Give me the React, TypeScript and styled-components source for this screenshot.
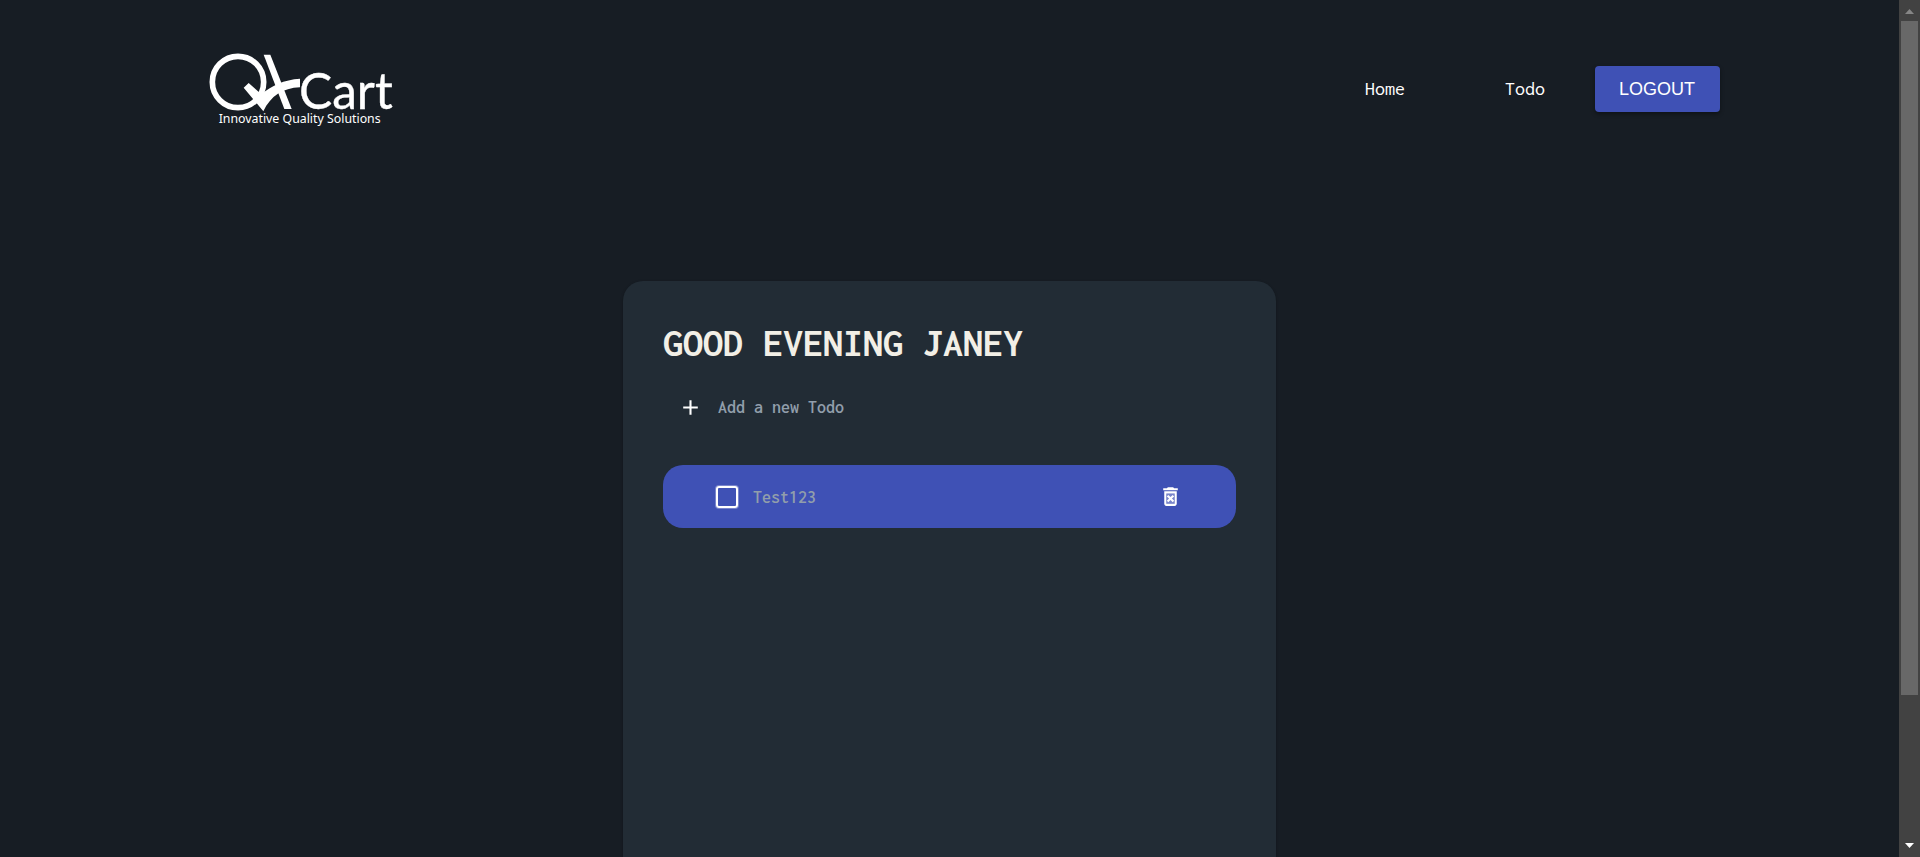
import React from "react";
import styled, { createGlobalStyle } from "styled-components";

const MONO = 'Inconsolata, "Liberation Mono", monospace';

const GlobalStyle = createGlobalStyle`
  *, *::before, *::after { box-sizing: border-box; }
  body { margin: 0; background: #171d24; color: #fff; font-family: ${MONO}; }
`;

const Shell = styled.div`
  display: flex;
  height: 100vh;
`;

const Page = styled.div`
  flex: 1;
  min-width: 0;
  overflow: auto;
  scrollbar-width: none;
`;

const Header = styled.header`
  display: flex;
  align-items: center;
  justify-content: space-between;
  max-width: 1541px;
  height: 178px;
  margin: 0 auto;
`;

const LogoLink = styled.a`
  display: block;
  padding-left: 30px;
  color: #fff;
  svg { display: block; overflow: visible; }
`;

const Nav = styled.nav`
  display: flex;
  align-items: center;
`;

const NavLink = styled.a`
  padding: 0 50px;
  color: #fff;
  font-size: 20px;
  line-height: 24px;
  text-decoration: none;
`;

const LogoutButton = styled.button`
  width: 125px;
  height: 46px;
  padding: 0 24px;
  border: 0;
  border-radius: 4px;
  background: #3f51b5;
  color: #fff;
  font: 18px/24px "Liberation Sans", Arial, sans-serif;
  text-align: left;
  box-shadow: 0 2px 4px rgba(0, 0, 0, 0.4);
  cursor: pointer;
`;

const Card = styled.main`
  max-width: 653px;
  min-height: 710px;
  margin: 103px auto 40px;
  padding: 40px;
  border-radius: 20px;
  background: #222c35;
  box-shadow: 0 1px 3px rgba(0, 0, 0, 0.3);
`;

const Greeting = styled.h1`
  margin: 0;
  color: #f2efe6;
  font-size: 40px;
  font-weight: 700;
  line-height: 44px;
`;

const AddRow = styled.form`
  display: flex;
  align-items: center;
  gap: 15px;
  height: 40px;
  margin: 22px 0 38px;
  padding-left: 15px;
`;

const IconButton = styled.button`
  display: flex;
  padding: 0;
  border: 0;
  background: none;
  color: #fff;
  cursor: pointer;
`;

const TodoInput = styled.input`
  flex: 1;
  min-width: 0;
  padding: 0;
  border: 0;
  outline: 0;
  background: none;
  color: #fff;
  font: 600 18px/24px ${MONO};
  &::placeholder { color: #919eab; opacity: 1; }
`;

const TodoList = styled.ul`
  margin: 0;
  padding: 0;
  list-style: none;
`;

const TodoItem = styled.li`
  display: flex;
  align-items: center;
  justify-content: space-between;
  height: 63px;
  padding: 0 53px;
  border-radius: 20px;
  background: #3f51b5;
`;

const TodoLabel = styled.label`
  display: flex;
  align-items: center;
  gap: 15px;
  color: #919eab;
  font-size: 18px;
  font-weight: 600;
  line-height: 24px;
`;

const Checkbox = styled.input`
  appearance: none;
  width: 22px;
  height: 22px;
  margin: 0;
  border: 2px solid #fff;
  border-radius: 3px;
  box-shadow: 0 0 0 1px rgba(255, 255, 255, 0.3);
  &:checked { background: #fff; }
`;

const ScrollTrack = styled.div`
  display: flex;
  flex-direction: column;
  align-items: center;
  width: 21px;
  background: #424242;
`;

const ScrollThumb = styled.div`
  flex: 674;
  width: 17px;
  background: #686868;
`;

const ScrollRest = styled.div`
  flex: 141;
`;

const ScrollArrow = styled.svg`
  display: block;
  flex: none;
  width: 19px;
  height: 21px;
`;

function Logo() {
  return (
    <svg width="186" height="72" viewBox="39 40 558 216" fill="currentColor" role="img" aria-label="QxCart">
      <circle cx="126" cy="127" r="77" fill="none" stroke="currentColor" strokeWidth="17" />
      <path d="M203 45h20l64 163h-22z" />
      <path d="M143 144l15-14 38 34c30-26 68-44 116-47v26c-52 2-88 26-110 72z" />
      <text x="309" y="208" fontFamily="Lato, sans-serif" fontSize="149" stroke="currentColor" strokeWidth="1">Cart</text>
      <text x="68" y="249" fontFamily='"Noto Sans", sans-serif' fontSize="37">Innovative Quality Solutions</text>
    </svg>
  );
}

export default function App() {
  return (
    <>
      <GlobalStyle />
      <Shell>
        <Page>
          <Header>
            <LogoLink href="#home"><Logo /></LogoLink>
            <Nav>
              <NavLink href="#home">Home</NavLink>
              <NavLink href="#todo">Todo</NavLink>
              <LogoutButton type="button">LOGOUT</LogoutButton>
            </Nav>
          </Header>
          <Card>
            <Greeting>GOOD EVENING JANEY</Greeting>
            <AddRow onSubmit={(e) => e.preventDefault()}>
              <IconButton type="submit" aria-label="Add todo">
                <svg width="25" height="25" viewBox="0 0 24 24" fill="currentColor"><path d="M19 13h-6v6h-2v-6H5v-2h6V5h2v6h6z" /></svg>
              </IconButton>
              <TodoInput placeholder="Add a new Todo" aria-label="Add a new Todo" />
            </AddRow>
            <TodoList>
              <TodoItem>
                <TodoLabel><Checkbox type="checkbox" />Test123</TodoLabel>
                <IconButton type="button" aria-label="Delete Test123">
                  <svg width="25" height="25" viewBox="0 0 24 24" fill="currentColor">
                    <path d="M8 9h8v10H8z" opacity="0.3" />
                    <path d="M14.12 10.47L12 12.59l-2.13-2.12-1.41 1.41L10.59 14l-2.12 2.12 1.41 1.41L12 15.41l2.12 2.12 1.41-1.41L13.41 14l2.12-2.12zM15.5 4l-1-1h-5l-1 1H5v2h14V4zM6 19c0 1.1.9 2 2 2h8c1.1 0 2-.9 2-2V7H6v12zM8 9h8v10H8V9z" />
                  </svg>
                </IconButton>
              </TodoItem>
            </TodoList>
          </Card>
        </Page>
        <ScrollTrack aria-hidden="true">
          <ScrollArrow viewBox="0 0 19 21"><path d="M5 14l4.500-5 4.500 5z" fill="#868686" /></ScrollArrow>
          <ScrollThumb />
          <ScrollRest />
          <ScrollArrow viewBox="0 0 19 21"><path d="M5 7l4.500 5 4.500-5z" fill="#fff" /></ScrollArrow>
        </ScrollTrack>
      </Shell>
    </>
  );
}
